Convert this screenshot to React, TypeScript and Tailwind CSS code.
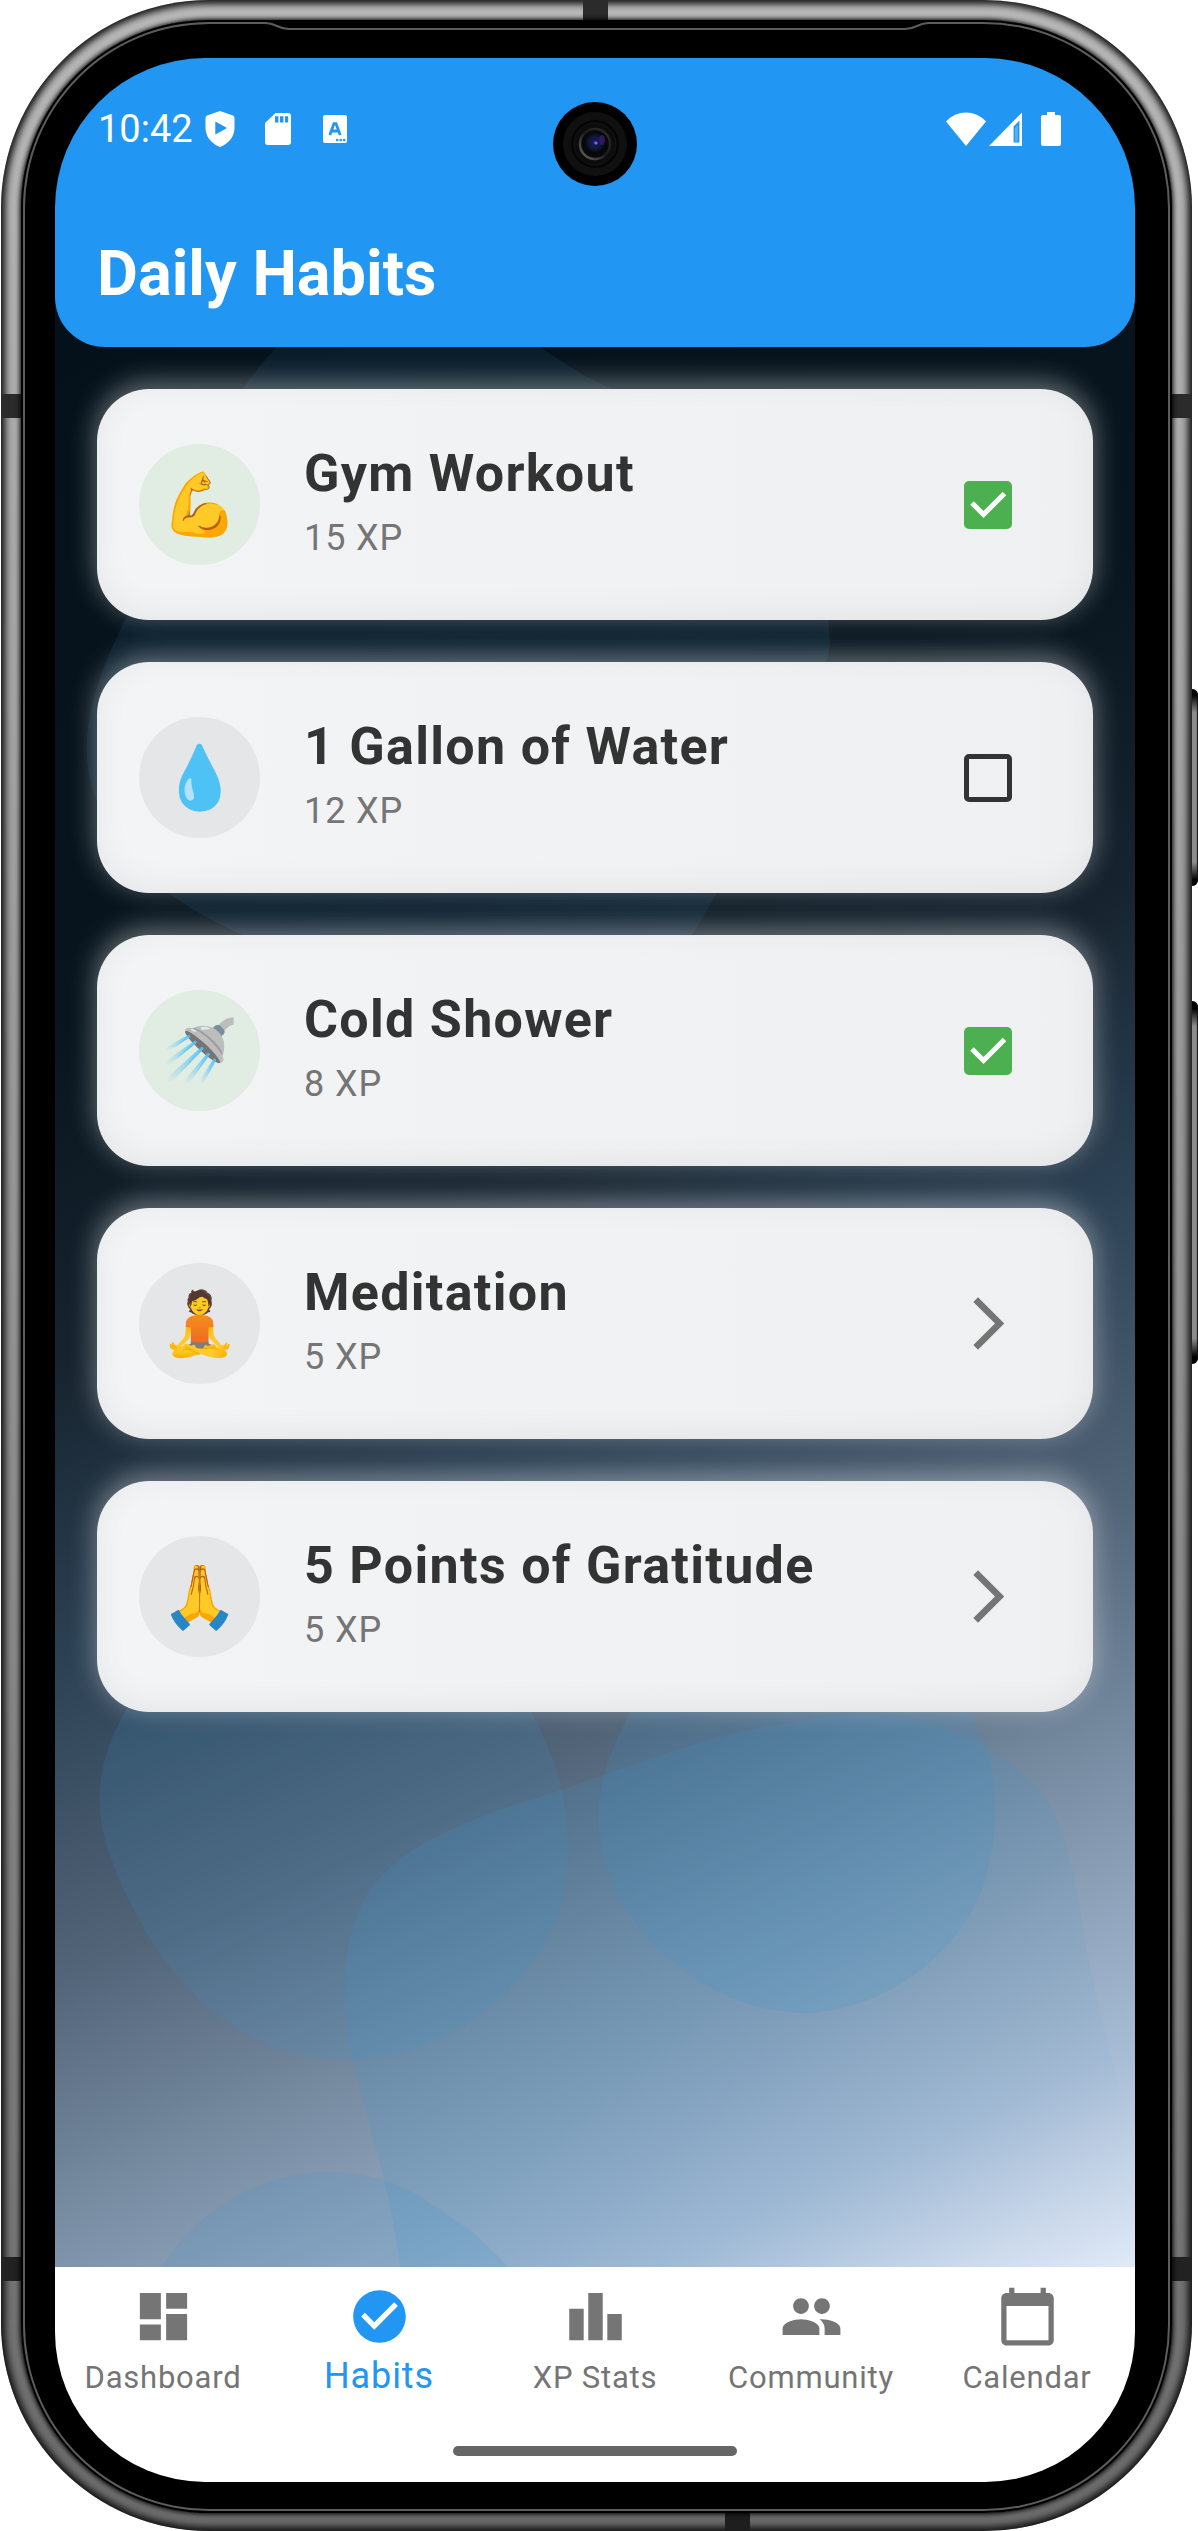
import { useState } from "react";
import {
  MdArrowForwardIos,
  MdCalendarToday,
  MdCheckCircle,
  MdDashboard,
  MdLeaderboard,
  MdPeople,
} from "react-icons/md";
import type { IconType } from "react-icons";

type Habit = {
  id: string;
  name: string;
  xp: number;
  emoji: string;
  kind: "check" | "link";
};

const HABITS: Habit[] = [
  { id: "gym", name: "Gym Workout", xp: 15, emoji: "💪", kind: "check" },
  { id: "water", name: "1 Gallon of Water", xp: 12, emoji: "💧", kind: "check" },
  { id: "shower", name: "Cold Shower", xp: 8, emoji: "🚿", kind: "check" },
  { id: "meditation", name: "Meditation", xp: 5, emoji: "🧘", kind: "link" },
  { id: "gratitude", name: "5 Points of Gratitude", xp: 5, emoji: "🙏", kind: "link" },
];

const TABS: { name: string; Icon: IconType; active?: boolean }[] = [
  { name: "Dashboard", Icon: MdDashboard },
  { name: "Habits", Icon: MdCheckCircle, active: true },
  { name: "XP Stats", Icon: MdLeaderboard },
  { name: "Community", Icon: MdPeople },
  { name: "Calendar", Icon: MdCalendarToday },
];

function StatusBar() {
  return (
    <div className="flex h-12 items-center justify-between pl-px pr-8 text-white">
      <div className="flex items-center">
        <span className="text-[38px] leading-[48px]">10:42</span>
        <svg className="ml-3 h-9 w-[30px]" viewBox="0 0 30 36" aria-hidden="true">
          <path
            fill="currentColor"
            fillRule="evenodd"
            d="M15 0 28 4.6Q29.5 5.2 29.5 7V17C29.5 26 23 33 15 36 7 33 .5 26 .5 17V7Q.5 5.2 2 4.6ZM10.3 10.6V23.6L22 17Z"
          />
        </svg>
        <svg className="ml-[30px] h-8 w-[26px]" viewBox="0 0 26 32" aria-hidden="true">
          <path
            fill="currentColor"
            fillRule="evenodd"
            d="M10.5 0H23Q26 0 26 3V29Q26 32 23 32H3Q0 32 0 29V10ZM10 3.2V9.6H13.4V3.2ZM15 3.2V9.6H18.4V3.2ZM20 3.2V9.6H23.2V3.2Z"
          />
        </svg>
        <svg className="ml-8 h-7 w-6" viewBox="0 0 24 28" aria-hidden="true">
          <rect width="24" height="28" rx="2" fill="currentColor" />
          <path
            d="M6.8 20 11 8.6H13L17.2 20M8.4 16H15.6"
            fill="none"
            stroke="#2196f3"
            strokeWidth="2.8"
          />
          <g fill="#2196f3">
            <circle cx="14.2" cy="25" r="1.3" />
            <circle cx="17.7" cy="25" r="1.3" />
            <circle cx="21.2" cy="25" r="1.3" />
          </g>
        </svg>
      </div>
      <div className="flex items-center">
        <svg className="h-[34px] w-10" viewBox="0 0 40 34" aria-hidden="true">
          <path fill="currentColor" d="M0 9.5Q8.5.5 20 .5T40 9.5L20 34Z" />
        </svg>
        <svg className="ml-[3px] h-[34px] w-[33px]" viewBox="0 0 33 34" aria-hidden="true">
          <path
            fill="currentColor"
            fillRule="evenodd"
            d="M33 .5V34H0ZM30.4 8.5 24.6 14.5V30.6H30.4Z"
          />
          <path fill="currentColor" d="M26 16 28.8 12.8V29.2H26Z" opacity=".25" />
        </svg>
        <svg className="ml-[19px] h-[34px] w-5" viewBox="0 0 20 34" aria-hidden="true">
          <path
            fill="currentColor"
            d="M6 0H14V3H18Q20 3 20 5V32Q20 34 18 34H2Q0 34 0 32V5Q0 3 2 3H6Z"
          />
        </svg>
      </div>
    </div>
  );
}

function Camera() {
  return (
    <svg
      className="absolute left-1/2 top-11 size-[84px] -translate-x-1/2"
      viewBox="0 0 84 84"
      aria-hidden="true"
    >
      <defs>
        <radialGradient id="lens" cx="50%" cy="48%" r="50%">
          <stop offset="0" stopColor="#4a2fd0" />
          <stop offset=".2" stopColor="#1c1262" />
          <stop offset=".55" stopColor="#0d1c33" />
          <stop offset="1" stopColor="#050507" />
        </radialGradient>
        <linearGradient id="ring" x1="0" y1="1" x2="1" y2="0">
          <stop offset="0" stopColor="#6a6a6a" />
          <stop offset=".5" stopColor="#1c1c1c" />
          <stop offset="1" stopColor="#2c2c2c" />
        </linearGradient>
      </defs>
      <circle cx="42" cy="42" r="42" fill="#000" />
      <circle cx="42" cy="42" r="32" fill="#101010" />
      <circle cx="42" cy="42" r="24" fill="#050505" />
      <circle cx="42" cy="42" r="21" fill="#0c0c0c" stroke="#161616" />
      <circle cx="42" cy="42" r="15" fill="#08080a" stroke="url(#ring)" strokeWidth="2.5" />
      <circle cx="42" cy="41" r="11" fill="url(#lens)" />
      <ellipse cx="49" cy="38" rx="3" ry="5" fill="#3a1a6e" opacity=".8" />
      <circle cx="43" cy="41" r="1.5" fill="#7d6bff" />
    </svg>
  );
}

function Backdrop() {
  return (
    <div
      className="absolute inset-x-0 -top-16 bottom-0 bg-[linear-gradient(156deg,#04111a_0%,#08151e_30%,#17242f_44%,#2c4154_56%,#536579_69%,#7d92a8_80%,#a6bbd4_91%,#e0eaf8_100%)]"
      aria-hidden="true"
    >
      <svg className="size-full" viewBox="0 283 1080 1984" preserveAspectRatio="none">
        <defs>
          <linearGradient id="fade" x1="0" y1="0" x2=".8" y2=".8">
            <stop offset="0" stopColor="#3795d0" />
            <stop offset=".55" stopColor="#3795d0" />
            <stop offset="1" stopColor="#3795d0" stopOpacity="0" />
          </linearGradient>
        </defs>
        <g fill="#3795d0">
          <path
            opacity=".09"
            d="M222 347C260 305 330 290 400 300C440 308 500 365 557 389C650 430 740 500 765 580C778 630 776 650 771 662C757 740 700 830 637 935C600 1000 500 1040 400 1020C300 1000 240 960 188 935C120 905 55 860 35 780C20 710 60 640 90 580C120 500 170 400 222 347Z"
          />
          <path
            opacity=".15"
            d="M70 1712C110 1620 200 1570 290 1580C390 1590 440 1650 478 1715C508 1770 520 1830 510 1890C490 1980 400 2058 290 2060C200 2060 130 2000 90 1930C45 1850 25 1790 70 1712Z"
          />
          <path
            opacity=".17"
            d="M575 1712C610 1630 680 1590 750 1600C830 1610 890 1650 915 1712C945 1760 945 1830 930 1880C905 1960 820 2014 745 2013C660 2010 590 1950 560 1890C530 1820 545 1770 575 1712Z"
          />
          <path
            opacity=".16"
            fill="url(#fade)"
            d="M315 1890C345 1850 390 1830 450 1808C560 1775 640 1735 740 1722C860 1700 940 1740 985 1790C1008 1818 1020 1870 1030 1940C1045 2020 1064 2090 1080 2140V2400H400C370 2360 350 2300 345 2267C335 2180 310 2120 298 2060C282 1990 290 1930 315 1890Z"
          />
          <path
            opacity=".15"
            d="M95 2290C125 2220 200 2172 270 2172C350 2172 380 2210 410 2226C450 2260 480 2290 490 2340H80Z"
          />
        </g>
      </svg>
    </div>
  );
}

function HabitCheckbox({ name, initial }: { name: string; initial: boolean }) {
  const [checked, setChecked] = useState(initial);
  return (
    <label className="relative flex h-[121px] w-[126px] shrink-0 items-center justify-center">
      <input
        type="checkbox"
        aria-label={name}
        checked={checked}
        onChange={() => setChecked(!checked)}
        className="peer size-12 appearance-none rounded-[5px] border-[5px] border-[#333] checked:border-[#4caf50] checked:bg-[#4caf50]"
      />
      <svg
        className="pointer-events-none absolute hidden size-12 peer-checked:block"
        viewBox="0 0 48 48"
        aria-hidden="true"
      >
        <path d="M8 22 19.5 33.5 40.5 12.5" fill="none" stroke="#fff" strokeWidth="5" />
      </svg>
    </label>
  );
}

function HabitCard({ habit, done }: { habit: Habit; done: boolean }) {
  return (
    <li className="flex items-center rounded-[52px] bg-gradient-to-r from-[#f3f4f5] to-[#eff0f1] px-[42px] py-[53px] shadow-[0_-6px_26px_2px_rgba(255,255,255,0.36),inset_0_-6px_30px_0_rgba(70,80,95,0.08)]">
      <div
        className={
          done
            ? "flex size-[121px] shrink-0 items-center justify-center rounded-full bg-[#e1ece2]"
            : "flex size-[121px] shrink-0 items-center justify-center rounded-full bg-[#e5e6e7]"
        }
      >
        <span className="font-['Noto_Color_Emoji',sans-serif] text-[62px] leading-[72px]">
          {habit.emoji}
        </span>
      </div>
      <div className="ml-11 min-w-0 flex-1">
        <h2 className="text-[52px] font-bold leading-[63px] tracking-wide text-[#333]">
          {habit.name}
        </h2>
        <p className="mt-1 text-[36px] leading-[58px] tracking-wide text-[#757575]">
          {habit.xp} XP
        </p>
      </div>
      {habit.kind === "check" ? (
        <HabitCheckbox name={habit.name} initial={done} />
      ) : (
        <button
          type="button"
          aria-label={`Open ${habit.name}`}
          className="flex h-[121px] w-[126px] shrink-0 items-center justify-center text-[#757575]"
        >
          <MdArrowForwardIos className="size-[63px]" />
        </button>
      )}
    </li>
  );
}

function TabBar() {
  return (
    <nav className="relative flex h-[215px] flex-col justify-between bg-white pb-[26px] pt-[18px]">
      <ul className="grid grid-cols-5">
        {TABS.map(({ name, Icon, active }) => (
          <li key={name}>
            <a
              href={`#${name.toLowerCase().replace(" ", "-")}`}
              aria-current={active ? "page" : undefined}
              className={
                active
                  ? "flex flex-col items-center gap-1 text-[36px] leading-[48px] tracking-wide text-[#2196f3]"
                  : "flex flex-col items-center gap-1 text-[31px] leading-[52px] tracking-wide text-[#757575]"
              }
            >
              <Icon className="size-[63px]" />
              {name}
            </a>
          </li>
        ))}
      </ul>
      <div className="mx-auto h-[10px] w-[284px] rounded-full bg-[#666]" />
    </nav>
  );
}

export default function App() {
  return (
    <div className="relative flex min-h-screen bg-white pl-px pr-1.5 font-[Roboto,sans-serif]">
      {/* Power and volume keys */}
      <div className="absolute right-0 top-[689px] h-[197px] w-2.5 rounded-r-md bg-[linear-gradient(#000_3%,#8c8c8c_12%,#8c8c8c_88%,#000_97%)] shadow-[inset_-1px_0_1px_#111]" />
      <div className="absolute right-0 top-[1001px] h-[363px] w-2.5 rounded-r-md bg-[linear-gradient(#000_2%,#8c8c8c_7%,#8c8c8c_93%,#000_98%)] shadow-[inset_-1px_0_1px_#111]" />

      <div className="relative flex flex-1 flex-col overflow-hidden rounded-[208px] bg-gradient-to-b from-[#b8b8b8] via-[#949494] to-[#6c6c6c] px-5 pb-[18px] pt-5 shadow-[inset_0_0_7px_4px_#111]">
        {/* Antenna bands */}
        <div className="absolute left-[582px] top-0 h-6 w-[25px] bg-[#2b2b2b]" />
        <div className="absolute bottom-0 left-[724px] h-6 w-[25px] bg-[#1e1e1e]" />
        <div className="absolute inset-x-0 top-[394px] h-6 bg-[#2b2b2b]" />
        <div className="absolute inset-x-0 top-[2257px] h-6 bg-[#222]" />

        <div className="relative flex flex-1 flex-col rounded-[188px] bg-black pb-[31px] pl-[34px] pr-[37px] pt-[38px] shadow-[0_0_5px_1px_#000,inset_0_0_0_2px_#000,inset_0_0_0_4px_#5c5c5c]">
          {/* Earpiece slit along the top of the glass */}
          <svg
            className="absolute left-1/2 top-0 h-3 w-[696px] -translate-x-1/2"
            viewBox="0 0 696 12"
            aria-hidden="true"
          >
            <path fill="#000" d="M18 0H678V8H18Z" />
            <path
              d="M0 3H16Q22 3 28 6T40 9H656Q662 9 668 6T680 3H696"
              fill="none"
              stroke="#5c5c5c"
              strokeWidth="2"
            />
          </svg>

          <div className="relative flex flex-1 flex-col overflow-hidden rounded-[150px] bg-[#04101a]">
            <header className="relative z-10 rounded-b-[50px] bg-[#2196f3] px-[42px] pb-[35px] pt-[47px]">
              <StatusBar />
              <Camera />
              <h1 className="mt-[83px] text-[63px] font-bold leading-[76px] text-white">
                Daily Habits
              </h1>
            </header>
            <main className="relative flex-1 p-[42px]">
              <Backdrop />
              <ul className="relative flex flex-col gap-[42px]">
                {HABITS.map((habit) => (
                  <HabitCard
                    key={habit.id}
                    habit={habit}
                    done={habit.id === "gym" || habit.id === "shower"}
                  />
                ))}
              </ul>
            </main>
            <TabBar />
          </div>
        </div>
      </div>
    </div>
  );
}
